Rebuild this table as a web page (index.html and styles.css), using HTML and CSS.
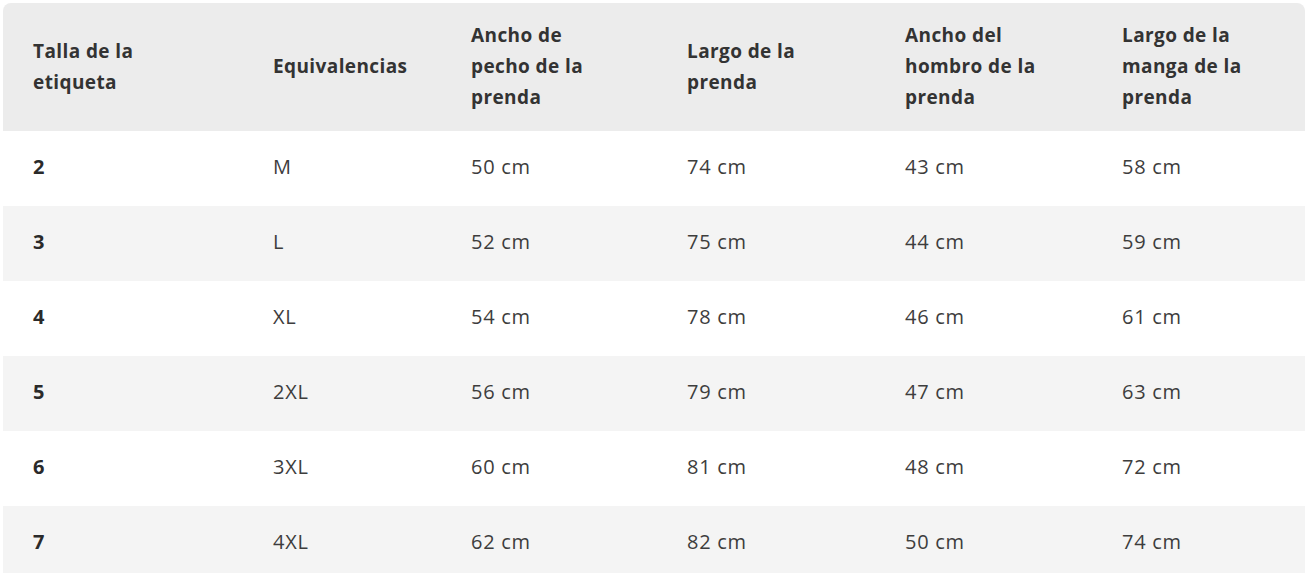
FILE: index.html
```html
<!DOCTYPE html>
<html lang="es">
<head>
<meta charset="utf-8">
<link rel="stylesheet" href="styles.css">
</head>
<body>
<div class="wrap">
<table class="sizes">
<colgroup>
<col class="c1"><col class="c2"><col class="c3"><col class="c4"><col class="c5"><col class="c6">
</colgroup>
<thead>
<tr>
<th>Talla de la etiqueta</th>
<th>Equivalencias</th>
<th>Ancho de pecho de la prenda</th>
<th>Largo de la prenda</th>
<th>Ancho del hombro de la prenda</th>
<th>Largo de la manga de la prenda</th>
</tr>
</thead>
<tbody>
<tr><td class="num">2</td><td>M</td><td>50 cm</td><td>74 cm</td><td>43 cm</td><td>58 cm</td></tr>
<tr><td class="num">3</td><td>L</td><td>52 cm</td><td>75 cm</td><td>44 cm</td><td>59 cm</td></tr>
<tr><td class="num">4</td><td>XL</td><td>54 cm</td><td>78 cm</td><td>46 cm</td><td>61 cm</td></tr>
<tr><td class="num">5</td><td>2XL</td><td>56 cm</td><td>79 cm</td><td>47 cm</td><td>63 cm</td></tr>
<tr><td class="num">6</td><td>3XL</td><td>60 cm</td><td>81 cm</td><td>48 cm</td><td>72 cm</td></tr>
<tr><td class="num">7</td><td>4XL</td><td>62 cm</td><td>82 cm</td><td>50 cm</td><td>74 cm</td></tr>
</tbody>
</table>
</div>
</body>
</html>
```
FILE: styles.css
```css
html, body {
  margin: 0;
  padding: 0;
  background: #ffffff;
}
body {
  font-family: "Open Sans", Lato, "Liberation Sans", sans-serif;
  color: #333333;
}
.wrap {
  padding: 3px 3px 0 3px;
}
.sizes {
  width: 1302px;
  border-collapse: separate;
  border-spacing: 0;
  table-layout: fixed;
  font-size: 19px;
  letter-spacing: 0.4px;
}
.c1 { width: 240px; }
.c2 { width: 198px; }
.c3 { width: 216px; }
.c4 { width: 218px; }
.c5 { width: 217px; }
.c6 { width: 213px; }
.sizes th {
  background: #ececec;
  text-align: left;
  font-weight: 700;
  line-height: 31px;
  padding: 17px 40px 18px 30px;
  vertical-align: middle;
  color: #333333;
}
.sizes th:first-child { border-top-left-radius: 8px; }
.sizes th:last-child { border-top-right-radius: 8px; }
.sizes td {
  height: 75px;
  padding: 0 30px 4px 30px;
  box-sizing: border-box;
  vertical-align: middle;
  line-height: 24px;
  font-size: 20px;
  letter-spacing: 0.7px;
  color: #3d3d3d;
}
.sizes tbody tr:nth-child(even) td { background: #f4f4f4; }
.sizes td.num { font-weight: 700; color: #2a2a2a; font-size: 20px; letter-spacing: 0.4px; }
```
